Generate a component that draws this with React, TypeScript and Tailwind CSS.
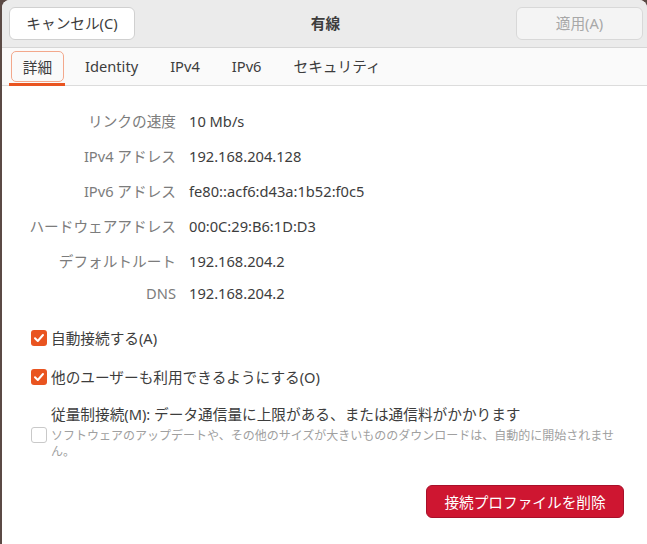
import React from 'react';

const font = { fontFamily: '"Noto Sans", "Noto Sans CJK JP", sans-serif' };

const rows: { label: string; value: string; h: string }[] = [
  { label: 'リンクの速度', value: '10 Mb/s', h: 'h-[35px]' },
  { label: 'IPv4 アドレス', value: '192.168.204.128', h: 'h-[35px]' },
  { label: 'IPv6 アドレス', value: 'fe80::acf6:d43a:1b52:f0c5', h: 'h-[35px]' },
  { label: 'ハードウェアアドレス', value: '00:0C:29:B6:1D:D3', h: 'h-[35px]' },
  { label: 'デフォルトルート', value: '192.168.204.2', h: 'h-[35px]' },
  { label: 'DNS', value: '192.168.204.2', h: 'h-[29px]' },
];

const tabs = ['詳細', 'Identity', 'IPv4', 'IPv6', 'セキュリティ'];

const Check: React.FC<{ checked: boolean }> = ({ checked }) =>
  checked ? (
    <div className="w-[16px] h-[16px] rounded-[3px] bg-[#e95420] flex items-center justify-center shrink-0">
      <svg width="12" height="12" viewBox="0 0 12 12" fill="none">
        <path d="M2 6.2 L4.8 9 L10 3" stroke="white" strokeWidth="2" strokeLinecap="round" strokeLinejoin="round" />
      </svg>
    </div>
  ) : (
    <div className="w-[16px] h-[16px] rounded-[3px] border border-[#c9c9c9] bg-white shrink-0" />
  );

export default function App() {
  return (
    <div className="w-[647px] h-[544px] bg-[#5b4a45] overflow-hidden" style={font}>
      <div className="ml-[2px] h-full bg-white rounded-t-[8px] overflow-hidden flex flex-col text-[14.67px] text-[#3d3d3d]">
        {/* header bar */}
        <div className="h-[48px] shrink-0 bg-[#ebebeb] border-b border-[#d6d6d6] flex items-center justify-between pl-[7px] pr-[4px] pb-[1px]">
          <button className="w-[126px] h-[33px] rounded-[6px] bg-white border border-[#d0d0d0] text-[#3d3d3d]">
            キャンセル(C)
          </button>
          <div className="font-bold text-[#3d3d3d]">有線</div>
          <button className="w-[127px] h-[33px] rounded-[6px] bg-[#f4f4f4] border border-[#d8d8d8] text-[#a8a8a8]">
            適用(A)
          </button>
        </div>

        {/* tabs */}
        <div className="h-[38px] shrink-0 bg-[#fafafa] border-b border-[#dcdcdc] flex items-end pl-[6px]">
          {tabs.map((t, i) =>
            i === 0 ? (
              <div key={t} className="relative h-[36px] w-[61px] flex items-start pl-[3px]">
                <div className="mt-[2px] w-[53px] h-[31px] rounded-[5px] border border-[#f3a88c] flex items-center justify-center">
                  {t}
                </div>
                <div className="absolute bottom-[-1px] left-[1px] w-[56px] h-[3px] bg-[#e95420]" />
              </div>
            ) : (
              <div key={t} className="h-[36px] px-[16px] flex items-center pb-[3px]">
                {t}
              </div>
            )
          )}
        </div>

        {/* content */}
        <div className="flex-1 flex flex-col pt-[17px]">
          <div className="flex flex-col">
            {rows.map((r) => (
              <div key={r.label} className={`${r.h} flex items-center`}>
                <div className="w-[174px] text-right text-[#7c7c7c]">{r.label}</div>
                <div className="pl-[13px]">{r.value}</div>
              </div>
            ))}
          </div>

          <div className="mt-[19px] h-[24px] flex items-center pl-[29px] gap-[4px]">
            <Check checked />
            <span>自動接続する(A)</span>
          </div>
          <div className="mt-[15px] h-[24px] flex items-center pl-[29px] gap-[4px]">
            <Check checked />
            <span>他のユーザーも利用できるようにする(O)</span>
          </div>
          <div className="mt-[14px] flex items-center pl-[29px] gap-[4px]">
            <div className="mt-[6px]">
              <Check checked={false} />
            </div>
            <div className="w-[569px]">
              <div className="leading-[22px]">従量制接続(M): データ通信量に上限がある、または通信料がかかります</div>
              <div className="text-[12px] leading-[16px] text-[#a0a0a0] mt-[3px]">
                ソフトウェアのアップデートや、その他のサイズが大きいもののダウンロードは、自動的に開始されません。
              </div>
            </div>
          </div>

          <div className="mt-[25px] flex justify-end pr-[23px]">
            <button className="w-[198px] h-[33px] rounded-[6px] bg-[#ce1631] border border-[#a8102a] text-white">
              接続プロファイルを削除
            </button>
          </div>
        </div>
      </div>
    </div>
  );
}
